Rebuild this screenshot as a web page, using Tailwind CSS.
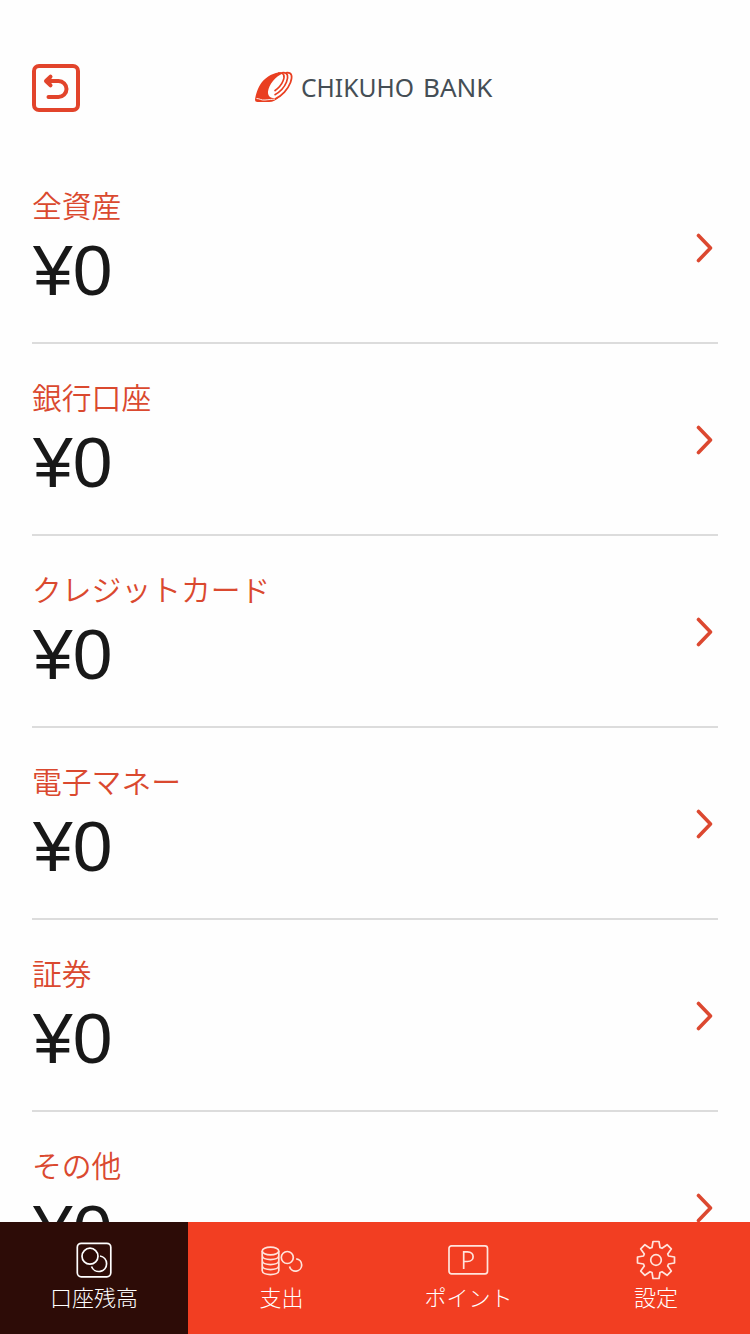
<!DOCTYPE html>
<html lang="ja">
<head>
    <meta charset="UTF-8">
    <meta name="viewport" content="width=device-width, initial-scale=1.0">
    <title>CHIKUHO BANK</title>
    <script src="https://cdn.jsdelivr.net/npm/@tailwindcss/browser@4"></script>
    <style>
        body {
            font-family: 'Noto Sans CJK JP', 'Noto Sans', sans-serif;
        }
        .amount {
            font-family: 'Liberation Sans', Arial, sans-serif;
        }
    </style>
</head>
<body class="bg-white">
    <div class="relative h-[1334px] w-[750px] overflow-hidden bg-[#fefefe]">
        <header class="grid h-[152px] grid-cols-[1fr_auto_1fr] items-center px-8 pt-6">
            <button class="block size-12" aria-label="戻る">
                <svg viewBox="0 0 48 48" class="size-12" fill="none" stroke="#e2442b" stroke-width="4" stroke-linecap="round" stroke-linejoin="round">
                    <rect x="2" y="2" width="44" height="44" rx="5"/>
                    <path d="M16.5 33H26.500a7.900 7.900 0 0 0 0-16H15"/>
                    <path d="M18.500 12.700 14 17l4.500 4.300"/>
                </svg>
            </button>
            <div class="flex items-center">
                <svg viewBox="0 0 240 40" class="h-10 w-60">
                    <path fill="#e93f21" d="M28 4.200C20 3.500 12 8 7 14C2.500 20 1 26 0 31.500Q0 34 2.500 34H14C18 34 21 32 24 29.500C17 31.500 12.500 29 13 23.500C14 17 20 8 29 5Z"/>
                    <path fill="none" stroke="#fefefe" stroke-width=".9" d="M1.500 30.500C5 30.500 6 32.500 10 32C14 31.500 17 31.500 20 31"/>
                    <g fill="none" stroke="#e93f21" stroke-width="1.700">
                        <path d="M23 5.200C29.500 4 30 8 28 13C26.500 17 23 20.500 19.500 23"/>
                        <path d="M27 4.800C33.500 4 33.500 9 31.500 14C29.500 19 25 24 19.500 27"/>
                        <path d="M31 4.800C37.500 4 37.500 9 35.500 14.500C33 21 27 28 20 31"/>
                    </g>
                    <g font-family="Noto Sans" font-size="26" fill="#454e55">
                        <text x="46" y="28.500" textLength="113" lengthAdjust="spacingAndGlyphs">CHIKUHO</text>
                        <text x="168" y="28.500" textLength="69.500" lengthAdjust="spacingAndGlyphs">BANK</text>
                    </g>
                </svg>
            </div>
        </header>

        <main id="accountList" class="px-8">
            <!-- Rows are inserted here -->
        </main>

        <nav class="absolute inset-x-0 bottom-0 grid h-28 grid-cols-[188px_187px_187px_188px] bg-[#f23e22] text-[22px] leading-7 font-light text-white">
            <a class="flex flex-col items-center bg-[#2d0c07] pt-4">
                <svg viewBox="0 0 44 44" class="size-11" fill="none" stroke="#fff" stroke-width="1.7">
                    <rect x="5.300" y="5.300" width="33.500" height="33.500" rx="4"/>
                    <circle cx="18" cy="18.200" r="8"/>
                    <path d="M28 18A7.800 7.800 0 1 1 19.500 28.500"/>
                </svg>
                <span>口座残高</span>
            </a>
            <a class="flex flex-col items-center pt-4">
                <svg viewBox="0 0 44 44" class="size-11" fill="none" stroke="#ffe4dc" stroke-width="1.7">
                    <ellipse cx="10.500" cy="13" rx="8.300" ry="3.800"/>
                    <path d="M2.200 13V32.500C2.200 38 18.800 38 18.800 32.500V13M2.200 17.500C2.200 23 18.800 23 18.800 17.500M2.200 22.500C2.200 28 18.800 28 18.800 22.500M2.200 27.500C2.200 33 18.800 33 18.800 27.500"/>
                    <circle cx="27.300" cy="19.500" r="6"/>
                    <path d="M36.200 20.800A6.200 6.200 0 1 1 29.500 28.500"/>
                </svg>
                <span>支出</span>
            </a>
            <a class="flex flex-col items-center pt-4">
                <svg viewBox="0 0 44 44" class="size-11" fill="none" stroke="#ffe4dc" stroke-width="1.7">
                    <rect x="2" y="7.800" width="38.500" height="28" rx="2.500"/>
                    <path d="M16.700 31V13.800H20.500C28 13.800 28 23.500 20.500 23.500H16.700"/>
                </svg>
                <span>ポイント</span>
            </a>
            <a class="flex flex-col items-center pt-4">
                <svg viewBox="-22 -22 44 44" class="size-11" fill="none" stroke="#ffe4dc" stroke-width="1.7" stroke-linejoin="round">
                    <path d="M-4-12.500-3-18.500H3L4-12.500 6-11.700 11.100-15.300 15.300-11.100 11.700-6 12.500-4 18.500-3V3L12.500 4 11.700 6 15.300 11.100 11.100 15.300 6 11.700 4 12.500 3 18.500H-3L-4 12.500-6 11.700-11.100 15.300-15.300 11.100-11.700 6-12.500 4-18.500 3V-3L-12.500-4-11.700-6-15.300-11.100-11.100-15.300-6-11.700Z"/>
                    <circle r="5.300"/>
                </svg>
                <span>設定</span>
            </a>
        </nav>
    </div>

    <script>
        const accounts = [
            { name: '全資産', amount: 0 },
            { name: '銀行口座', amount: 0 },
            { name: 'クレジットカード', amount: 0 },
            { name: '電子マネー', amount: 0 },
            { name: '証券', amount: 0 },
            { name: 'その他', amount: 0 }
        ];

        function createRow(account) {
            return `
                <a class="flex h-48 items-center justify-between border-b-2 border-[#dcdcdc]">
                    <div class="h-full pt-8">
                        <h2 class="text-[29.8px] leading-10 font-[350] text-[#da492f]">${account.name}</h2>
                        <p class="amount w-20 origin-left scale-x-[1.02] pl-px text-[70px] leading-[95px] text-[#181818]">¥${account.amount}</p>
                    </div>
                    <svg viewBox="0 0 24 32" class="h-8 w-6" fill="none" stroke="#dc4830" stroke-width="3.6" stroke-linecap="round" stroke-linejoin="round">
                        <path d="M4.500 4.500 16.500 17 4.500 29.500"/>
                    </svg>
                </a>
            `;
        }

        document.getElementById('accountList').innerHTML = accounts.map(createRow).join('');
    </script>
</body>
</html>
